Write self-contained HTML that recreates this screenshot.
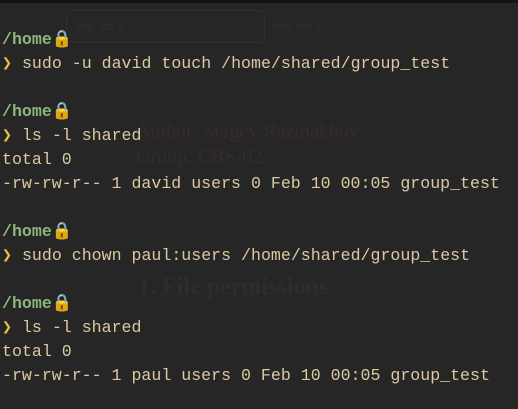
<!DOCTYPE html>
<html><head><meta charset="utf-8"><style>
html,body{margin:0;padding:0;}
body{width:518px;height:409px;background:#262626;overflow:hidden;position:relative;font-family:"Liberation Mono","DejaVu Sans Mono",monospace;}
.top{position:absolute;left:0;top:0;width:518px;height:3px;background:#141414;}
.tab{position:absolute;left:66px;top:10px;width:197px;height:31px;border:1px solid #33302a;border-radius:6px;}
.ghost{position:absolute;color:#303030;font-family:"Liberation Sans",sans-serif;font-size:11px;}
.serif{position:absolute;color:#382a2a;font-family:"Liberation Serif",serif;white-space:nowrap;}
.term{position:absolute;left:2px;top:28px;font-size:16.6px;line-height:24px;color:#dcc8a2;white-space:pre;}
.g{color:#8cb57c;font-weight:bold;}
.y{color:#e6c24a;}
</style></head><body>
<div class="top"></div>
<div class="tab"></div>
<div class="ghost" style="left:76px;top:21px">sna. lab 3</div>
<div class="ghost" style="left:273px;top:21px">sna. lab 2</div>
<div class="serif" style="left:136px;top:120px;font-size:20px">Author: Sergey Razmakhov</div>
<div class="serif" style="left:136px;top:146px;font-size:20px">Group: CBS-02</div>
<div class="serif" style="left:138px;top:274px;font-size:24px;font-weight:bold;color:#2e2c2c">1. File permissions</div>
<div class="term"><span class="g">/home</span>🔒
<span class="y">❯</span> sudo -u david touch /home/shared/group_test

<span class="g">/home</span>🔒
<span class="y">❯</span> ls -l shared
total 0
-rw-rw-r-- 1 david users 0 Feb 10 00:05 group_test

<span class="g">/home</span>🔒
<span class="y">❯</span> sudo chown paul:users /home/shared/group_test

<span class="g">/home</span>🔒
<span class="y">❯</span> ls -l shared
total 0
-rw-rw-r-- 1 paul users 0 Feb 10 00:05 group_test</div>
</body></html>
